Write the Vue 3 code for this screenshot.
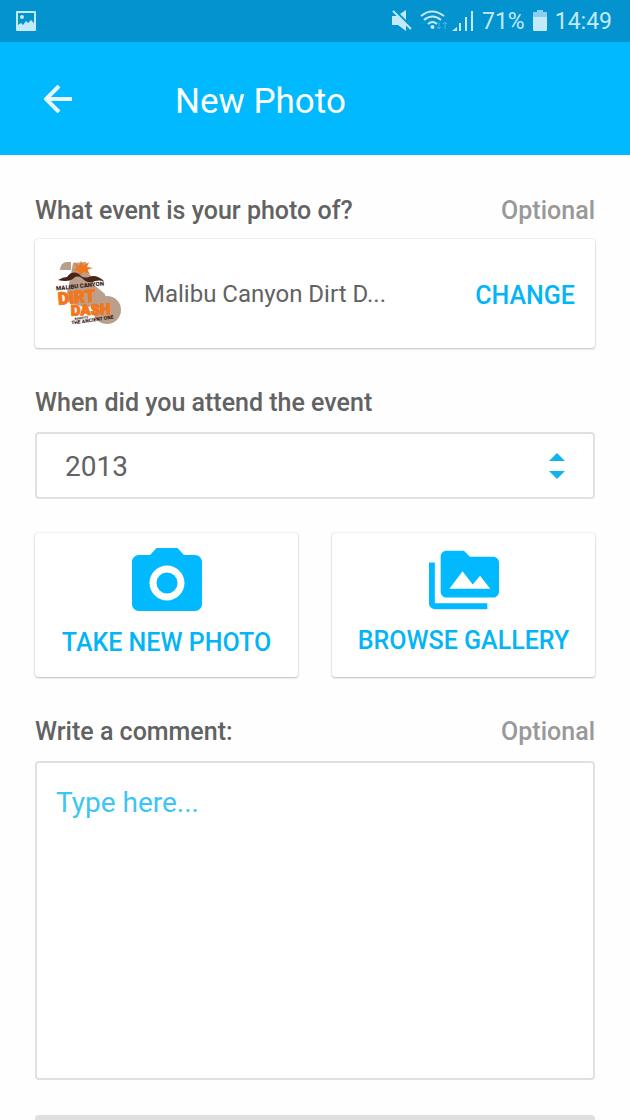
<script setup>
import { ref } from 'vue'

const years = [2018, 2017, 2016, 2015, 2014, 2013, 2012]
const year = ref(2013)
const comment = ref('')
</script>

<template>
  <div class="app">
    <div class="status">
      <svg class="status-photo" viewBox="0 0 20 20" aria-hidden="true">
        <path fill-rule="evenodd" d="M1 0h18a1 1 0 0 1 1 1v18a1 1 0 0 1-1 1H1a1 1 0 0 1-1-1V1a1 1 0 0 1 1-1zm1 2v12l3-2 2 2 3-4 2 2 3-3 3 3V2z" />
        <circle cx="6" cy="6" r="2" />
      </svg>

      <div class="status-right">
        <svg class="mute" viewBox="0 0 20 22" aria-hidden="true">
          <path d="M0 6h5l9-6v21l-8-6H0z" />
          <path class="slash-gap" d="M2 0l18 18" />
          <path class="slash" d="M1 1l18 18" />
        </svg>
        <div class="network">
          <svg class="wifi" viewBox="0 0 28 22" aria-hidden="true">
            <g class="waves">
              <path d="M1 6q11-9 23 0" />
              <path d="M4 10q8.500-7 17 0" />
              <path d="M8 14q4.500-4 9 0" />
            </g>
            <circle cx="12.500" cy="17" r="2" />
            <path class="traffic" d="M19 12v7m-2-2l2 2 2-2M25 19v-7m-2 2l2-2 2 2" />
          </svg>
          <svg class="signal" viewBox="0 0 22 22" aria-hidden="true">
            <path d="M0 21l5-4v4zM7 13h2v8H7zM13 7h2v14h-2zM19 1h2v20h-2z" />
          </svg>
        </div>
        <span>71%</span>
        <svg class="battery" viewBox="0 0 14 22" aria-hidden="true">
          <path d="M4 0h6v2h3a1 1 0 0 1 1 1v4H0V3a1 1 0 0 1 1-1h3z" opacity=".7" />
          <path d="M0 7h14v13a1 1 0 0 1-1 1H1a1 1 0 0 1-1-1z" />
        </svg>
        <span>14:49</span>
      </div>
    </div>

    <header class="header">
      <button class="back" type="button" aria-label="Back">
        <svg viewBox="0 0 28 28" aria-hidden="true">
          <path d="M28 14H2M15 1L2 14l13 13" />
        </svg>
      </button>
      <h1 class="title">New Photo</h1>
    </header>

    <main class="form">
      <div class="row">
        <h2 class="label">What event is your photo of?</h2>
        <span class="optional">Optional</span>
      </div>
      <div class="card event">
        <svg class="logo" viewBox="0 0 66 66" aria-hidden="true">
          <g fill="#b9a08c">
            <path d="M5 8q1-6 6-7h5v8H5z" />
            <path d="M18 2l13-1 3 12 6 5-2 5 12 10 1 6-20 8L10 40l4-17z" />
            <circle cx="52" cy="49" r="14" />
          </g>
          <path fill="#f2761c" d="M19 1l5 4 2-5 2 5 6-4-2 5 6 1-6 2 3 4-6-2-4 3-2-4-5-1 4-2z" />
          <path d="M3 19q5-3 9-3 5-7 12-3 4 5 10 3 7-3 15 4-5-1-9 0-6 3-11-1-4-5-9-3-5 6-17 3z" fill="#4b2417" />
          <g transform="rotate(-6 25 25)">
            <text class="logo-dark" x="1" y="27" font-size="6">MALIBU CANYON</text>
          </g>
          <g transform="rotate(-5 22 38)">
            <text class="logo-orange" x="3" y="42" font-size="17">DIRT</text>
          </g>
          <g transform="rotate(-2 34 53)">
            <text class="logo-orange" x="16" y="54" font-size="15">DASH</text>
          </g>
          <g transform="rotate(-8 35 59)">
            <text class="logo-dark" x="20" y="57" font-size="3">BENEFITS</text>
            <text class="logo-dark" x="16" y="61" font-size="5">THE ANCIENT ONE</text>
          </g>
        </svg>
        <span class="event-name">Malibu Canyon Dirt D...</span>
        <button class="change" type="button">CHANGE</button>
      </div>

      <label class="label" for="year">When did you attend the event</label>
      <div class="select">
        <select id="year" v-model="year">
          <option v-for="y in years" :key="y" :value="y">{{ y }}</option>
        </select>
        <svg class="arrows" viewBox="0 0 16 28" aria-hidden="true">
          <path d="M0 9l8-8 8 8zM0 19h16l-8 8z" />
        </svg>
      </div>

      <div class="sources">
        <button class="card source" type="button">
          <svg class="camera" viewBox="0 0 24 24" aria-hidden="true">
            <circle cx="12" cy="12" r="3" />
            <path d="M9 2L7.170 4H4c-1.100 0-2 .9-2 2v12c0 1.100.9 2 2 2h16c1.100 0 2-.9 2-2V6c0-1.100-.9-2-2-2h-3.170L15 2H9zm3 15c-2.760 0-5-2.240-5-5s2.240-5 5-5 5 2.240 5 5-2.240 5-5 5z" />
          </svg>
          <span>TAKE NEW PHOTO</span>
        </button>
        <button class="card source" type="button">
          <svg class="gallery" viewBox="0 0 24 24" aria-hidden="true">
            <path d="M2 6H0v14c0 1.100.9 2 2 2h18v-2H2V6zm20-2h-8l-2-2H6c-1.100 0-2 .9-2 2v12c0 1.100.9 2 2 2h16c1.100 0 2-.9 2-2V6c0-1.100-.9-2-2-2zM7 15l4.500-6 3.500 4.500 2.500-3L21 15H7z" />
          </svg>
          <span>BROWSE GALLERY</span>
        </button>
      </div>

      <div class="row">
        <label class="label" for="comment">Write a comment:</label>
        <span class="optional">Optional</span>
      </div>
      <textarea id="comment" v-model="comment" class="comment" placeholder="Type here..."></textarea>

      <button class="submit" type="submit" aria-label="Submit" disabled></button>
    </main>
  </div>
</template>

<style>
body {
  margin: 0;
  background: #fefefe;
}
</style>

<style scoped>
.app {
  display: flex;
  flex-direction: column;
  height: 100vh;
  font-family: Roboto, "Liberation Sans", sans-serif;
  color: #626262;
}

.app * {
  box-sizing: border-box;
}

button,
select,
textarea {
  font-family: inherit;
  margin: 0;
}

button {
  padding: 0;
  border: 0;
  background: none;
  cursor: pointer;
}

/* Status bar */
.status {
  display: flex;
  flex: none;
  align-items: center;
  justify-content: space-between;
  height: 42px;
  padding: 0 18px 0 16px;
  background: #0394cf;
  color: #c4e9f8;
  fill: #c4e9f8;
  font-size: 23px;
}

.status-photo {
  width: 20px;
  height: 20px;
}

.status-right,
.network {
  display: flex;
  align-items: center;
}

.status-right {
  gap: 8px;
}

.network {
  gap: 4px;
}

.mute {
  width: 20px;
  height: 22px;
}

.slash {
  stroke: #c4e9f8;
  stroke-width: 2;
}

.slash-gap {
  stroke: #0394cf;
  stroke-width: 3;
}

.wifi {
  width: 28px;
  height: 22px;
}

.waves {
  fill: none;
  stroke: #c4e9f8;
  stroke-width: 2;
}

.traffic {
  fill: none;
  stroke: #50b8e2;
  stroke-width: 1;
}

.signal {
  width: 22px;
  height: 22px;
}

.battery {
  width: 14px;
  height: 22px;
}

/* Header */
.header {
  display: flex;
  flex: none;
  align-items: center;
  gap: 95px;
  height: 113px;
  padding: 0 36px;
  background: #00b9ff;
  color: #fff;
}

.back {
  display: flex;
  padding: 8px;
}

.back svg {
  width: 28px;
  height: 28px;
  fill: none;
  stroke: #e8f8ff;
  stroke-width: 4;
}

.title {
  margin: 0;
  padding-top: 6px;
  font-size: 35px;
  font-weight: 400;
  line-height: 42px;
}

/* Form */
.form {
  display: flex;
  flex: 1;
  flex-direction: column;
  min-height: 0;
  padding: 41px 35px 35px;
  overflow-y: auto;
  scrollbar-width: none;
}

.form > * {
  flex: none;
}

.row {
  display: flex;
  justify-content: space-between;
}

.label,
.optional {
  margin: 0;
  font-size: 25px;
  font-weight: 500;
  line-height: 30px;
}

.optional {
  color: #999;
}

.card {
  background: #fff;
  border-radius: 3px;
  box-shadow: 0 0 2px rgba(0, 0, 0, 0.16), 0 1px 2px rgba(0, 0, 0, 0.22);
}

.event {
  display: flex;
  align-items: center;
  height: 109px;
  margin: 13px 0 40px;
  padding: 0 20px;
}

.logo {
  width: 66px;
  height: 66px;
}

.logo text {
  font-family: Roboto, "Liberation Sans", sans-serif;
  font-weight: 900;
}

.logo-dark {
  fill: #3b1d14;
}

.logo-orange {
  fill: #f2761c;
  stroke: #f2761c;
  stroke-width: 1;
}

.event-name {
  flex: 1;
  padding-left: 23px;
  font-size: 24px;
}

.change,
.source {
  color: #03b5f7;
  font-size: 25px;
  font-weight: 500;
  line-height: 30px;
}

.change {
  padding-top: 4px;
}

.select {
  position: relative;
  height: 67px;
  margin: 14px 0 34px;
}

.select select {
  width: 100%;
  height: 100%;
  padding: 2px 28px 0;
  appearance: none;
  border: 2px solid #e1e1e1;
  border-radius: 4px;
  background: #fff;
  color: #626262;
  font-size: 28px;
}

.arrows {
  position: absolute;
  top: 20px;
  right: 30px;
  width: 16px;
  height: 28px;
  fill: #0fb3f0;
  pointer-events: none;
}

.sources {
  display: grid;
  grid-template-columns: 1fr 1fr;
  gap: 34px;
  margin-bottom: 40px;
}

.source {
  display: flex;
  flex-direction: column;
  align-items: center;
  height: 144px;
  padding-top: 8px;
}

.source svg {
  fill: #00b9ff;
}

.camera {
  width: 84px;
  height: 84px;
  margin-bottom: 3px;
}

.gallery {
  width: 70px;
  height: 70px;
  margin: 4px 0 11px;
}

.comment {
  display: block;
  width: 100%;
  height: 319px;
  margin: 14px 0 35px;
  padding: 23px 19px;
  resize: none;
  border: 2px solid #e1e1e1;
  border-radius: 4px;
  background: #fff;
  color: #626262;
  font-size: 28px;
  line-height: 34px;
}

.comment::placeholder {
  color: #3cc5f5;
  opacity: 1;
}

.submit {
  height: 66px;
  border-radius: 4px;
  background: #dfdfdf;
}
</style>
